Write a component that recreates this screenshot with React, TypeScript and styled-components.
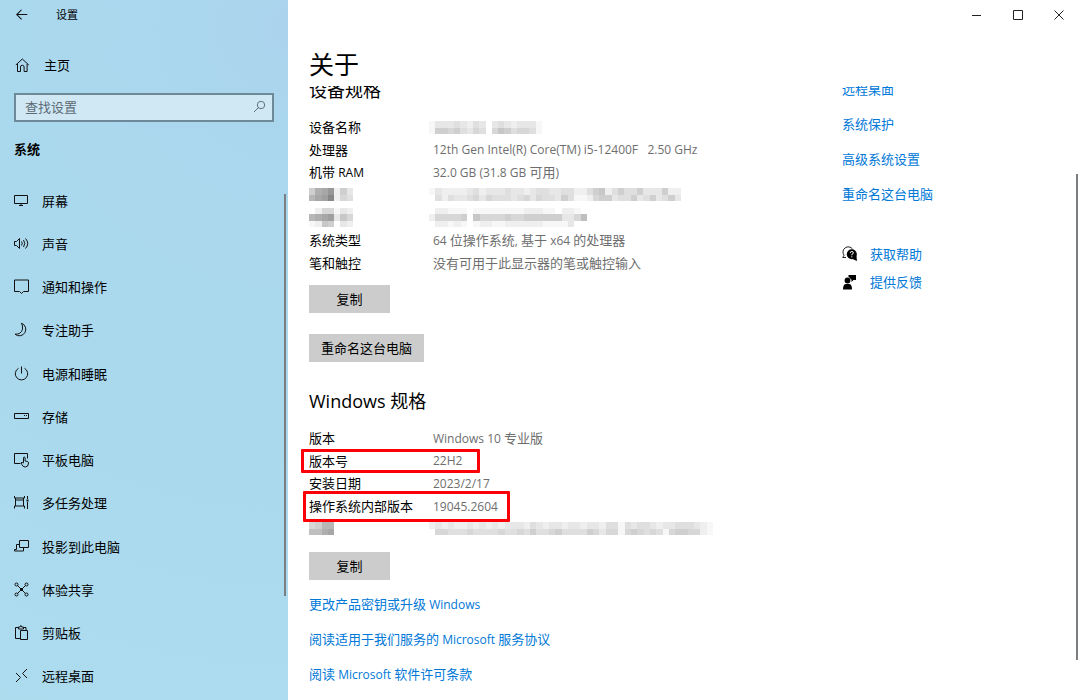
import React from "react";
import styled, { createGlobalStyle } from "styled-components";

const GlobalStyle = createGlobalStyle`
  *, *::before, *::after { box-sizing: border-box; }
  body {
    margin: 0;
    background: #fff;
    color: #000;
    font-family: "Open Sans", "Noto Sans CJK SC", sans-serif;
    font-size: 13px;
    line-height: 20px;
  }
  h1, h2, dl, dd, ul { margin: 0; padding: 0; font-weight: 400; }
  ul { list-style: none; }
  button, input { font: inherit; color: inherit; }
`;

const Window = styled.div`
  display: flex;
  height: 100vh;
  overflow: hidden;
`;

const Sidebar = styled.aside`
  position: relative;
  flex: 0 0 288px;
  display: flex;
  flex-direction: column;
  background: radial-gradient(circle at 100% 4%, #acd3ee 0, #aad7ed 120px, #aad9ee 420px, #addcef 100%);
`;

const TitleBar = styled.div`
  display: flex;
  align-items: center;
  gap: 24px;
  height: 30px;
  padding-left: 12px;
  font-size: 11px;
`;

const IconButton = styled.button<{ $width: number }>`
  display: flex;
  align-items: center;
  justify-content: center;
  width: ${(p) => p.$width}px;
  height: 29px;
  padding: 0;
  border: 0;
  background: none;
`;

const NavLink = styled.a<{ $gap: number }>`
  display: flex;
  align-items: center;
  gap: ${(p) => p.$gap}px;
  min-height: 43px;
  padding-left: 14px;
  color: #000;
  text-decoration: none;
`;

const NavList = styled.nav`
  display: grid;
  grid-auto-rows: 1fr;
  height: 519px;
`;

const HomeLink = styled(NavLink)`
  margin-top: 13px;
`;

const SearchBox = styled.form`
  display: flex;
  align-items: center;
  height: 29px;
  margin: 7px 14px 0;
  padding: 0 6px 2px 9px;
  border: 2px solid #6e8a99;
  background: #d0e7f4;
`;

const SearchInput = styled.input`
  flex: 1;
  min-width: 0;
  height: 20px;
  padding: 0;
  border: 0;
  outline: 0;
  background: none;
  &::placeholder { color: #5c6b74; opacity: 1; }
`;

const SectionName = styled.h2`
  margin: 17px 0 20px;
  padding-left: 14px;
  font-size: 13px;
  font-weight: 700;
`;

const ScrollThumb = styled.div<{ $top: number; $bottom: number; $right: number }>`
  position: absolute;
  top: ${(p) => p.$top}px;
  bottom: ${(p) => p.$bottom}px;
  right: ${(p) => p.$right}px;
  width: 2px;
  background: #7b7f82;
`;

const Main = styled.main`
  position: relative;
  flex: 1;
  min-width: 0;
  display: flex;
  flex-direction: column;
`;

const WindowButtons = styled.div`
  display: flex;
  justify-content: flex-end;
`;

const PageTitle = styled.h1`
  height: 57px;
  padding: 17px 0 0 21px;
  font-size: 25px;
  line-height: 36px;
`;

const Viewport = styled.div`
  flex: 1;
  min-height: 0;
  display: flex;
  padding-left: 21px;
  overflow: hidden;
`;

const Details = styled.div`
  flex: 1;
  min-width: 0;
`;

const Related = styled.aside`
  flex: 0 0 238px;
`;

const Heading = styled.h2<{ $top: number }>`
  margin: ${(p) => p.$top}px 0 0;
  font-size: 18px;
  line-height: 26px;
`;

const SpecList = styled.dl<{ $height: number }>`
  display: grid;
  grid-auto-rows: 1fr;
  height: ${(p) => p.$height}px;
  margin-top: 13px;
`;

const SpecRow = styled.div`
  position: relative;
  display: grid;
  grid-template-columns: 124px 1fr;
  align-items: center;
`;

const SpecValue = styled.dd`
  color: #6e6e6e;
  white-space: pre;
`;

const Mark = styled.span<{ $top: number; $left: number; $width: number; $height: number }>`
  position: absolute;
  top: ${(p) => p.$top}px;
  left: ${(p) => p.$left}px;
  width: ${(p) => p.$width}px;
  height: ${(p) => p.$height}px;
  border: 3px solid #fb0006;
  border-radius: 1px;
  pointer-events: none;
`;

const Latin = styled.span`
  font-size: 12px;
`;

const Button = styled.button<{ $top: number }>`
  display: block;
  min-width: 81px;
  height: 28px;
  margin-top: ${(p) => p.$top}px;
  padding: 0 12px;
  border: 0;
  background: #ccc;
`;

const LinkList = styled.ul<{ $top: number }>`
  margin-top: ${(p) => p.$top}px;
`;

const LinkItem = styled.li<{ $height: number }>`
  display: flex;
  align-items: center;
  gap: 12px;
  height: ${(p) => p.$height}px;
`;

const Link = styled.a`
  color: #0078d7;
  text-decoration: none;
`;

const MosaicSvg = styled.svg<{ $outdent?: boolean }>`
  display: block;
  margin-left: ${(p) => (p.$outdent ? -4 : 0)}px;
`;

const CELL = 6.3;

/* Each digit is the darkness of one cell, from 0 (white) to f. */
function Mosaic({ rows, outdent }: { rows: string[]; outdent?: boolean }) {
  const cols = rows[0].length;
  return (
    <MosaicSvg
      $outdent={outdent}
      width={Math.round(cols * CELL)}
      height={Math.round(rows.length * CELL)}
      viewBox={`0 0 ${cols} ${rows.length}`}
      preserveAspectRatio="none"
      shapeRendering="crispEdges"
      aria-hidden="true"
    >
      {rows.flatMap((row, y) =>
        [...row].map((digit, x) => {
          const shade = 255 - parseInt(digit, 16) * 8;
          return <rect key={`${x}-${y}`} x={x} y={y} width="1" height="1" fill={`rgb(${shade},${shade},${shade})`} />;
        })
      )}
    </MosaicSvg>
  );
}

function Mixed({ text }: { text: string }) {
  const parts = text.split(/([\x20-\x7e]+)/);
  return <>{parts.map((part, i) => (i % 2 ? <Latin key={i}>{part}</Latin> : part))}</>;
}

function Icon({ children, size = 16 }: { children: React.ReactNode; size?: number }) {
  return (
    <svg width={size} height={size} viewBox="0 0 16 16" fill="none" stroke="#111" strokeWidth="1" aria-hidden="true">
      {children}
    </svg>
  );
}

const icons = {
  back: <path d="M2 7.500H14M7.500 2 2 7.500 7.500 13" strokeWidth="1.200" />,
  home: <path d="M1.800 8 8.300 2l6.500 6M3.500 7v7.500h3V10a1.800 1.800 0 0 1 3.600 0v4.500h3V7" />,
  screen: <path d="M.5 2.500h13v8H.5zM5 12.500h4M7 10.500v2" />,
  sound: <path d="M.5 5.500v4h2l3 3V2.500l-3 3zM7.500 5.500q1.500 2 0 4M9.500 4q2.600 3.500 0 7M11.500 2.500q4.500 5 0 10" />,
  notice: <path d="M.5 1h14v11.500H9.500L7.500 14.500l-2-2H.5z" />,
  moon: <path d="M7.500 1.200a6.500 6.500 0 1 1-6.500 11q6 .4 7.500-5 .4-3.500-1-6z" />,
  power: <path d="M7.500.5v7M4.500 2.300a6.200 6.200 0 1 0 6 0" />,
  storage: <path d="M.5 4.500h14v5H.5zM10 6.500h1M12 6.500h1" />,
  tablet: (
    <>
      <path d="M6.500 11.500h-6v-10h13v5" />
      <path d="M9.500 10.500V6q0-1 .8-1t.8 1v3l2.500.5q1 .4.900 1.500 0 4-3.200 4-2.500 0-3.500-2.500l-.7-1.700q.8-1 2.400.2z" />
    </>
  ),
  tasks: (
    <>
      <path d="M.5 1v2h10V1M1.500 3v8M9.500 3v8M1.500 5h8M.5 13.500v-2.500h10v2.500M13.500 1v3M13.500 7v7" />
      <path d="M12.500 5.500h2" strokeWidth="2" />
    </>
  ),
  project: <path d="M5.500 8.500v-7h9v7zM5.500 5.500h-3v5h-2v1.500h9v-3" />,
  share: (
    <>
      <path d="m3.500 3.500 8 8M11.500 3.500l-8 8" />
      <circle cx="2.500" cy="2.500" r="1.500" />
      <circle cx="12.500" cy="2.500" r="1.500" />
      <circle cx="2.500" cy="12.500" r="1.500" />
      <circle cx="12.500" cy="12.500" r="1.500" />
      <rect x="6.500" y="6.500" width="2" height="2" fill="#111" />
    </>
  ),
  clipboard: <path d="M6 13.500H1.500v-11H4M9.500 2.500H12v3M4.500 4V2h1.500l.8-1.500L7.700 2h1.800v2zM6.500 5.500h7v9h-7z" />,
  remote: <path d="m2 5 4.500 4.500L2 14M13 1 8.500 5.500 13 10" />,
};

const navItems: [React.ReactNode, string][] = [
  [icons.screen, "屏幕"],
  [icons.sound, "声音"],
  [icons.notice, "通知和操作"],
  [icons.moon, "专注助手"],
  [icons.power, "电源和睡眠"],
  [icons.storage, "存储"],
  [icons.tablet, "平板电脑"],
  [icons.tasks, "多任务处理"],
  [icons.project, "投影到此电脑"],
  [icons.share, "体验共享"],
  [icons.clipboard, "剪贴板"],
  [icons.remote, "远程桌面"],
];

type Spec = {
  label?: string;
  value?: string;
  labelMosaic?: string[];
  valueMosaic?: string[];
  mark?: { top: number; left: number; width: number; height: number };
};

const deviceSpecs: Spec[] = [
  { label: "设备名称", valueMosaic: ["133343243034323331", "166564354057645541"] },
  { label: "处理器", value: "12th Gen Intel(R) Core(TM) i5-12400F   2.50 GHz" },
  { label: "机带 RAM", value: "32.0 GB (31.8 GB 可用)" },
  {
    labelMosaic: ["6abd263", "9bcf254"],
    valueMosaic: ["1322223423334332344334422467246446333622", "0424334535444345354436411256634463463463"],
  },
  {
    labelMosaic: ["0255132", "9abc375", "1276032"],
    valueMosaic: ["0221110111111112221102210", "2555560755556556666663358", "0221210122112222221111300"],
  },
  { label: "系统类型", value: "64 位操作系统, 基于 x64 的处理器" },
  { label: "笔和触控", value: "没有可用于此显示器的笔或触控输入" },
];

const windowsSpecs: Spec[] = [
  { label: "版本", value: "Windows 10 专业版" },
  { label: "版本号", value: "22H2", mark: { top: -1, left: -8, width: 179, height: 24 } },
  { label: "安装日期", value: "2023/2/17" },
  { label: "操作系统内部版本", value: "19045.2604", mark: { top: -4, left: -6, width: 207, height: 31 } },
  {
    labelMosaic: ["5699", "88ab"],
    valueMosaic: ["232322323232333243233233233244143443233444321", "055444544445445464456444465355156545415665521"],
  },
];

function Specs({ items, height }: { items: Spec[]; height: number }) {
  return (
    <SpecList $height={height}>
      {items.map((item, i) => (
        <SpecRow key={i}>
          <dt>{item.labelMosaic ? <Mosaic rows={item.labelMosaic} /> : <Mixed text={item.label ?? ""} />}</dt>
          <SpecValue>
            {item.valueMosaic ? <Mosaic rows={item.valueMosaic} outdent /> : <Mixed text={item.value ?? ""} />}
          </SpecValue>
          {item.mark && (
            <Mark $top={item.mark.top} $left={item.mark.left} $width={item.mark.width} $height={item.mark.height} />
          )}
        </SpecRow>
      ))}
    </SpecList>
  );
}

export default function App() {
  return (
    <>
      <GlobalStyle />
      <Window>
        <Sidebar>
          <TitleBar>
            <IconButton $width={20} aria-label="返回">
              <Icon size={14}>{icons.back}</Icon>
            </IconButton>
            <span>设置</span>
          </TitleBar>
          <HomeLink href="#home" $gap={14}>
            <Icon>{icons.home}</Icon>
            主页
          </HomeLink>
          <SearchBox role="search">
            <SearchInput type="text" placeholder="查找设置" aria-label="查找设置" />
            <svg width="13" height="13" viewBox="0 0 13 13" fill="none" stroke="#5f7480" aria-hidden="true">
              <circle cx="8" cy="5" r="3.700" />
              <path d="M5.300 7.700 1 12" />
            </svg>
          </SearchBox>
          <SectionName>系统</SectionName>
          <NavList>
            {navItems.map(([icon, label]) => (
              <NavLink key={label} href={`#${label}`} $gap={12}>
                <Icon>{icon}</Icon>
                {label}
              </NavLink>
            ))}
          </NavList>
          <ScrollThumb $top={194} $bottom={104} $right={2} />
        </Sidebar>
        <Main>
          <WindowButtons>
            <IconButton $width={42} aria-label="最小化">
              <svg width="10" height="10" stroke="#222"><path d="M1 5.500h9" /></svg>
            </IconButton>
            <IconButton $width={41} aria-label="最大化">
              <svg width="10" height="10" fill="none" stroke="#222"><path d="M.5.5h9v9h-9z" /></svg>
            </IconButton>
            <IconButton $width={42} aria-label="关闭">
              <svg width="10" height="10" stroke="#222"><path d="m.5.5 9 9M9.500.5l-9 9" /></svg>
            </IconButton>
          </WindowButtons>
          <PageTitle>关于</PageTitle>
          <Viewport>
            <Details>
              <Heading $top={-9}>设备规格</Heading>
              <Specs items={deviceSpecs} height={158} />
              <Button $top={11}>复制</Button>
              <Button $top={21}>重命名这台电脑</Button>
              <Heading $top={26}>Windows 规格</Heading>
              <Specs items={windowsSpecs} height={113} />
              <Button $top={12}>复制</Button>
              <LinkList $top={7}>
                {["更改产品密钥或升级 Windows", "阅读适用于我们服务的 Microsoft 服务协议", "阅读 Microsoft 软件许可条款"].map((text) => (
                  <LinkItem key={text} $height={35}>
                    <Link href="#"><Mixed text={text} /></Link>
                  </LinkItem>
                ))}
              </LinkList>
            </Details>
            <Related>
              <LinkList $top={-15}>
                {["远程桌面", "系统保护", "高级系统设置", "重命名这台电脑"].map((text) => (
                  <LinkItem key={text} $height={35}>
                    <Link href="#">{text}</Link>
                  </LinkItem>
                ))}
              </LinkList>
              <LinkList $top={29}>
                <LinkItem $height={28}>
                  <Icon>
                    <path d="M4 11.500H.8l1.200-2.300A5 5 0 1 1 10.500 3" stroke="#222" />
                    <circle cx="9.800" cy="8.300" r="5" fill="#000" stroke="none" />
                    <path d="M10.500 13 15 15l-.6-5.500z" fill="#000" stroke="none" />
                    <path d="M8.200 7q0-1.500 1.600-1.500t1.600 1.300q0 .8-1.600 1.700v.8M9.800 10.300v1" stroke="#fff" />
                  </Icon>
                  <Link href="#">获取帮助</Link>
                </LinkItem>
                <LinkItem $height={28}>
                  <Icon>
                    <g fill="#000" stroke="none">
                      <circle cx="5.500" cy="6.500" r="2.900" />
                      <path d="M1 15.500q0-5.500 3-5.500h3q3 0 3 5.500zM6.500 1H14v5h-2.500L9.500 8V5.500h-.7Q8.500 3.500 6.500 3z" />
                    </g>
                  </Icon>
                  <Link href="#">提供反馈</Link>
                </LinkItem>
              </LinkList>
            </Related>
          </Viewport>
          <ScrollThumb $top={174} $bottom={40} $right={2} />
        </Main>
      </Window>
    </>
  );
}
